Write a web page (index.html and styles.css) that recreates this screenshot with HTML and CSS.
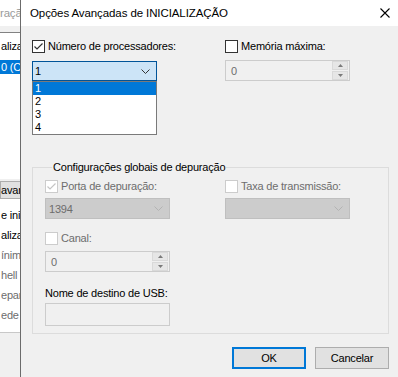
FILE: index.html
```html
<!DOCTYPE html>
<html lang="pt">
<head>
<meta charset="utf-8">
<title>Opções Avançadas de INICIALIZAÇÃO</title>
<link rel="stylesheet" href="styles.css">
</head>
<body>
<div class="screen">
  <div class="bgwin">
    <div class="bg-title"><span>raçã</span></div>
    <div class="bg-gap"></div>
    <div class="bg-list1">
      <div class="bg-row">aliza</div>
      <div class="bg-row sel">0 (C</div>
    </div>
    <div class="bg-btn">avan</div>
    <div class="bg-list2">
      <div class="bg-row">e inic</div>
      <div class="bg-row">alizaç</div>
      <div class="bg-row dim">ínima</div>
      <div class="bg-row dim">hell a</div>
      <div class="bg-row dim">epar</div>
      <div class="bg-row dim">ede</div>
    </div>
  </div>
  <div class="dialog">
    <div class="titlebar">
      <span class="title">Opções Avançadas de INICIALIZAÇÃO</span>
      <svg class="close" width="10" height="10" viewBox="0 0 10 10"><path d="M0.5 0.5L9.5 9.5M9.5 0.5L0.5 9.5" stroke="#000" stroke-width="1.1" fill="none"/></svg>
    </div>
    <div class="content">
      <div class="top-grid">
        <div class="field">
          <label class="chk"><span class="box"><svg width="11" height="11" viewBox="0 0 11 11"><path d="M1.5 5.5L4 8L9.5 2.5" stroke="#333" stroke-width="1.2" fill="none"/></svg></span>Número de processadores:</label>
          <div class="combo focused">
            <span class="val">1</span>
            <svg class="chev" width="9" height="5" viewBox="0 0 9 5"><path d="M0.5 0.5L4.5 4.5L8.5 0.5" stroke="#333" stroke-width="1" fill="none"/></svg>
            <ul class="droplist">
              <li class="hl">1</li>
              <li>2</li>
              <li>3</li>
              <li>4</li>
            </ul>
          </div>
        </div>
        <div class="field">
          <label class="chk"><span class="box"></span>Memória máxima:</label>
          <div class="spin spin-top">
            <span class="val">0</span>
            <div class="spinbtns">
              <span class="sb"><svg width="5" height="3" viewBox="0 0 5 3"><path d="M2.5 0L5 3H0Z" fill="#7a7a7a"/></svg></span>
              <span class="sb"><svg width="5" height="3" viewBox="0 0 5 3"><path d="M0 0H5L2.5 3Z" fill="#7a7a7a"/></svg></span>
            </div>
          </div>
        </div>
      </div>

      <fieldset class="group">
        <legend>Configurações globais de depuração</legend>
        <div class="g-grid">
          <div class="field">
            <label class="chk off"><span class="box"><svg width="11" height="11" viewBox="0 0 11 11"><path d="M1.5 5.5L4 8L9.5 2.5" stroke="#c4c4c4" stroke-width="1.2" fill="none"/></svg></span>Porta de depuração:</label>
            <div class="combo disabled">
              <span class="val">1394</span>
              <svg class="chev" width="9" height="5" viewBox="0 0 9 5"><path d="M0.5 0.5L4.5 4.5L8.5 0.5" stroke="#b3b3b3" stroke-width="1" fill="none"/></svg>
            </div>
          </div>
          <div class="field">
            <label class="chk off"><span class="box"></span>Taxa de transmissão:</label>
            <div class="combo disabled">
              <span class="val"></span>
              <svg class="chev" width="9" height="5" viewBox="0 0 9 5"><path d="M0.5 0.5L4.5 4.5L8.5 0.5" stroke="#b3b3b3" stroke-width="1" fill="none"/></svg>
            </div>
          </div>
          <div class="field f-canal">
            <label class="chk off"><span class="box"></span>Canal:</label>
            <div class="spin spin-g">
              <span class="val">0</span>
              <div class="spinbtns">
                <span class="sb"><svg width="5" height="3" viewBox="0 0 5 3"><path d="M2.5 0L5 3H0Z" fill="#7a7a7a"/></svg></span>
                <span class="sb"><svg width="5" height="3" viewBox="0 0 5 3"><path d="M0 0H5L2.5 3Z" fill="#7a7a7a"/></svg></span>
              </div>
            </div>
          </div>
          <div class="field f-usb">
            <div class="lbl">Nome de destino de USB:</div>
            <div class="textbox"></div>
          </div>
        </div>
      </fieldset>

      <div class="buttons">
        <button class="btn default">OK</button>
        <button class="btn">Cancelar</button>
      </div>
    </div>
  </div>
</div>
</body>
</html>
```
FILE: styles.css
```css
* { box-sizing: border-box; }
html, body { margin: 0; padding: 0; }
body {
  width: 398px;
  height: 377px;
  overflow: hidden;
  background: #f0f0f0;
  font-family: "Liberation Sans", Arial, sans-serif;
  font-size: 11px;
  letter-spacing: -0.2px;
  color: #000;
}
.screen {
  display: flex;
  width: 398px;
  height: 377px;
}

/* background window strip */
.bgwin {
  width: 20px;
  flex: none;
  overflow: hidden;
  background: #f0f0f0;
  display: flex;
  flex-direction: column;
  white-space: nowrap;
}
.bg-title {
  height: 26px;
  background: #fff;
  color: #9a9a9a;
  font-size: 11.5px;
  line-height: 26px;
  padding-left: 0;
}
.bg-gap { height: 6px; }
.bg-list1 {
  height: 147px;
  background: #fff;
  border-top: 1px solid #828282;
  padding-top: 4px;
}
.bg-row {
  height: 20px;
  line-height: 20px;
  padding-left: 1px;
}
.bg-list1 .bg-row { height: 18px; line-height: 18px; }
.bg-list1 .bg-row.sel {
  margin-top: 5px;
  height: 14px;
  line-height: 14px;
  background: #0078d7;
  color: #fff;
}
.bg-row.dim { color: #6d6d6d; }
.bg-btn {
  margin-top: 2px;
  height: 18px;
  line-height: 16px;
  background: #e1e1e1;
  border: 1px solid #adadad;
  border-right: none;
}
.bg-list2 {
  height: 134px;
  background: #fff;
  border-bottom: 1px solid #c8c8c8;
  padding-top: 6px;
}

/* dialog */
.dialog {
  flex: 1;
  border-left: 1px solid #6b6b6b;
  display: flex;
  flex-direction: column;
  background: #f0f0f0;
}
.titlebar {
  height: 26px;
  background: #fff;
  display: flex;
  align-items: center;
  padding-left: 9px;
  padding-right: 10px;
}
.title { flex: 1; white-space: nowrap; font-size: 11.5px; letter-spacing: -0.1px; }
.close { flex: none; }

.content {
  padding: 14px 11px 0 11px;
}
.top-grid {
  display: grid;
  grid-template-columns: 193px 125px;
}
.field { display: flex; flex-direction: column; }

.chk {
  display: flex;
  align-items: center;
  height: 13px;
  line-height: 13px;
  white-space: nowrap;
}
.box {
  width: 13px;
  height: 13px;
  border: 1px solid #333;
  background: #fff;
  margin-right: 3px;
  flex: none;
  display: flex;
  align-items: center;
  justify-content: center;
}
.chk.off { color: #6d6d6d; }
.chk.off .box { border-color: #cccccc; }

.combo {
  position: relative;
  width: 125px;
  height: 21px;
  margin-top: 7px;
  border: 1px solid #005499;
  background: #cce4f7;
  display: flex;
  align-items: center;
  padding-left: 2px;
  padding-right: 6px;
}
.combo .val { flex: 1; }
.combo.focused { margin-top: 8px; height: 20px; }
.combo.disabled {
  background: #cccccc;
  border-color: #bfbfbf;
  color: #6d6d6d;
  margin-top: 5px;
  padding-left: 3px;
}
.droplist {
  position: absolute;
  left: -1px;
  top: 19px;
  width: 125px;
  margin: 0;
  padding: 0;
  list-style: none;
  background: #fff;
  border: 1px solid #7a7a7a;
  z-index: 5;
}
.droplist li {
  height: 13px;
  line-height: 13px;
  padding-left: 2px;
}
.droplist li.hl { background: #0078d7; color: #fff; }

.spin {
  width: 125px;
  height: 21px;
  border: 1px solid #cccccc;
  background: #f0f0f0;
  color: #6d6d6d;
  display: flex;
  align-items: center;
  padding-left: 5px;
}
.spin .val { flex: 1; }
.spin-top { margin-top: 7px; }
.spin-g { margin-top: 6px; }
.spinbtns {
  width: 17px;
  height: 19px;
  display: flex;
  flex-direction: column;
  justify-content: space-between;
  padding: 0 1px 0 0;
}
.sb {
  height: 9px;
  background: #e6e6e6;
  border: 1px solid #d9d9d9;
  display: flex;
  align-items: center;
  justify-content: center;
}

.group {
  margin: 78px 0 0 0;
  width: 357px;
  border: 1px solid #dcdcdc;
  padding: 5px 12px 7px 12px;
  min-width: 0;
}
.group legend {
  padding: 0 1px;
  margin-left: 7px;
  line-height: 16px;
}
.g-grid {
  display: grid;
  grid-template-columns: 180px 125px;
}
.f-canal { margin-top: 13px; grid-column: 1; }
.f-usb { grid-column: 1; margin-top: 13px; }
.lbl { height: 16px; line-height: 16px; }
.textbox {
  margin-top: 2px;
  width: 125px;
  height: 23px;
  border: 1px solid #cccccc;
  background: #f0f0f0;
}

.buttons {
  display: flex;
  justify-content: flex-end;
  gap: 9px;
  margin-top: 13px;
}
.btn {
  width: 74px;
  height: 22px;
  font: inherit;
  letter-spacing: inherit;
  color: #000;
  background: #e1e1e1;
  border: 1px solid #adadad;
  padding: 0;
}
.btn.default { border: 2px solid #0078d7; }
```
